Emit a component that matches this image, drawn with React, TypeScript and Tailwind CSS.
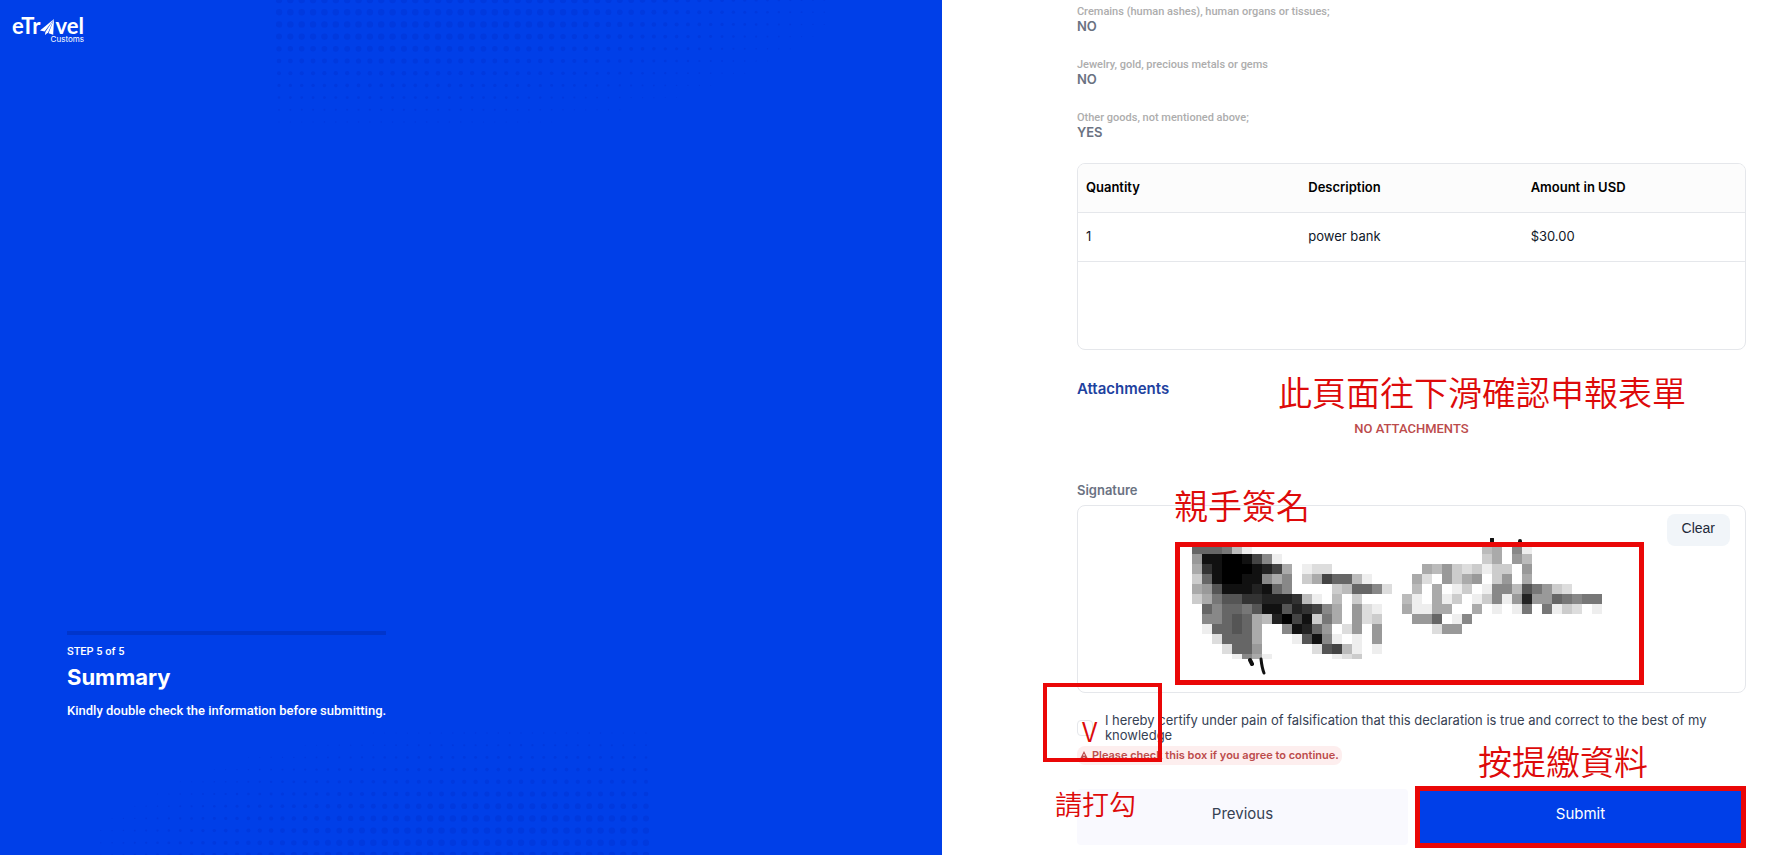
import React from "react";

type Declaration = { question: string; answer: string };
type Item = { quantity: number; description: string; amount: string };

const DECLARATIONS: Declaration[] = [
  { question: "Cremains (human ashes), human organs or tissues;", answer: "NO" },
  { question: "Jewelry, gold, precious metals or gems", answer: "NO" },
  { question: "Other goods, not mentioned above;", answer: "YES" }
];

const ITEMS: Item[] = [
  { quantity: 1, description: "power bank", amount: "$30.00" }
];

// one hex digit of grey per 10px block, "." is empty
const MOSAIC = [
  "6667be......................." + "ba.8e........",
  "91100148e...................." + "ca.9b........",
  "a31000124a.edd......." + "..ab9cdcecc.9........",
  "c6100118a8.ca466be..." + ".ad.9ca9.c9.a........",
  "a951112168....cb668d." + ".b.a.ec.e88b579cd....",
  "ca755332223be.b.c...." + "be.aec.ec8e929967877.",
  ".6866751152348a.9de.." + "aeeaa..a.e.e7.7ecd.e.",
  ".88656ab2041c7a.9dc.." + ".996.e8..............",
  ".e6656a..81269.d9.9.." + "...d99...............",
  "..d666a...e518e.e.9..",
  "...d669.....d54be.e..",
  "....e8ae......edc...."
];

const Dots = ({ flipped }: { flipped?: boolean }) => {
  const dots: React.ReactNode[] = [];
  for (let row = 0; row < 12; row++) {
    for (let col = 0; col < 49; col++) {
      const x = 3 + col * 11.36;
      const y = row * 12.2;
      const distance = Math.hypot((x - 124) / 510, (y + 50) / 195);
      const r = Math.min(3.2, 6 * (1 - distance));
      if (r > 0.4) {
        dots.push(<circle key={`${row}-${col}`} cx={x} cy={y} r={r} />);
      }
    }
  }
  return (
    <svg
      aria-hidden="true"
      width="560"
      height="140"
      viewBox="0 0 560 140"
      fill="#0039de"
      className={
        flipped
          ? "absolute bottom-0 left-[89px] rotate-180"
          : "absolute top-0 left-[276px]"
      }
    >
      {dots}
    </svg>
  );
};

const Logo = () => (
  <a href="#" aria-label="eTravel Customs" className="flex w-fit flex-col items-end">
    <span className="flex items-end text-[22px] leading-5 font-bold font-['Lato',sans-serif]">
      eTr
      <svg
        aria-hidden="true"
        width="15"
        height="18"
        viewBox="0 0 15 18"
        fill="currentColor"
      >
        <path d="M14 1 0 12.5l4.6 1Z" />
        <path d="M14 1 5.4 14l-.4 3 3.2-2.4Z" />
        <path d="M14 1 8.6 15.2l4.6 1.6Z" />
      </svg>
      vel
    </span>
    <span className="text-[8px] leading-[6px]">Customs</span>
  </a>
);

const Signature = () => (
  <svg
    aria-hidden="true"
    width="420"
    height="144"
    viewBox="0 0 420 144"
    shapeRendering="crispEdges"
    className="absolute top-8 left-[114px]"
  >
    {MOSAIC.map((row, y) =>
      row.split("").map((shade, x) =>
        shade === "." ? null : (
          <rect
            key={`${x}-${y}`}
            x={x * 10}
            y={y === 0 ? 8 : 6 + y * 10}
            width="10"
            height={y === 0 ? 8 : y === 11 ? 5 : 10}
            fill={`#${shade}${shade}${shade}`}
          />
        )
      )
    )}
    <g
      stroke="#111"
      strokeWidth="4"
      strokeLinecap="round"
      fill="none"
      shapeRendering="auto"
    >
      <path d="M300 1v4M328 3v2M58 122l2 4" />
      <path d="M69 121q1 9 3 14" strokeWidth="3" />
    </g>
  </svg>
);

const Note = ({ className, children }: { className: string; children: string }) => (
  <span
    className={`pointer-events-none absolute z-10 font-[350] whitespace-nowrap text-[#dd0a0a] font-['Noto_Sans_CJK_TC',sans-serif] ${className}`}
  >
    {children}
  </span>
);

const App = () => (
  <div className="flex min-h-screen bg-white font-['Inter',sans-serif] text-gray-900">
    <aside className="relative flex w-[52.8%] flex-col justify-between overflow-hidden bg-[#003fe8] text-white">
      <Dots />
      <Dots flipped />
      <div className="relative pt-4 pl-3">
        <Logo />
      </div>
      <div className="relative w-fit pb-[134px] pl-[67px]">
        <div className="h-1 bg-[#0035cc]" />
        <p className="mt-2 text-[11px] leading-[18px] font-medium font-['Roboto',sans-serif]">
          STEP 5 of 5
        </p>
        <h1 className="text-[22px] leading-8 font-bold">Summary</h1>
        <p className="mt-2 text-[13px] leading-5 font-medium font-['Roboto',sans-serif]">
          Kindly double check the information before submitting.
        </p>
      </div>
    </aside>

    <main className="flex-1 pt-1 pr-[38px] pb-1 pl-[135px]">
      <dl>
        {DECLARATIONS.map(({ question, answer }) => (
          <div key={question} className="h-[53px]">
            <dt className="text-[11px] leading-[15px] font-medium text-[#adadad] font-['Roboto',sans-serif]">
              {question}
            </dt>
            <dd className="text-[13px] leading-[14px] font-semibold text-gray-500">{answer}</dd>
          </div>
        ))}
      </dl>

      <div className="h-[187px] overflow-hidden rounded-lg border border-gray-200">
        <table className="w-full table-fixed border-separate border-spacing-0 text-left text-[13px]">
          <thead className="bg-[#fcfcfc] text-black">
            <tr className="h-[49px]">
              <th className="border-b border-gray-200 px-2 font-semibold">Quantity</th>
              <th className="border-b border-gray-200 px-2 font-semibold">Description</th>
              <th className="border-b border-gray-200 px-2 font-semibold">Amount in USD</th>
            </tr>
          </thead>
          <tbody>
            {ITEMS.map(({ quantity, description, amount }) => (
              <tr key={description} className="h-[49px]">
                <td className="border-b border-gray-200 px-2">{quantity}</td>
                <td className="border-b border-gray-200 px-2">{description}</td>
                <td className="border-b border-gray-200 px-2">{amount}</td>
              </tr>
            ))}
          </tbody>
        </table>
      </div>

      <section className="relative mt-[27px]">
        <h2 className="text-[15px] leading-6 font-semibold text-[#1e429f]">Attachments</h2>
        <Note className="-top-[5px] right-[60px] text-[34px] leading-10">
          此頁面往下滑確認申報表單
        </Note>
        <p className="mt-[18px] text-center text-[13px] leading-5 font-medium text-[#bc4b4b] font-['Roboto',sans-serif]">
          NO ATTACHMENTS
        </p>
      </section>

      <section className="mt-[41px]">
        <h2 className="text-[13px] leading-5 font-semibold text-gray-500">Signature</h2>
        <div className="relative mt-[5px] h-[188px] rounded-lg border border-gray-200">
          <Note className="-top-[21px] left-[96px] text-[34px] leading-10">親手簽名</Note>
          <Signature />
          <div className="pointer-events-none absolute top-9 right-[101px] bottom-[7px] left-[97px] border-[5px] border-[#ea0707]" />
          <button
            type="button"
            className="absolute top-2 right-[15px] rounded-lg bg-slate-100 px-[15px] pt-1 pb-2 text-sm leading-5 text-gray-800 font-['Liberation_Sans',sans-serif]"
          >
            Clear
          </button>
        </div>
      </section>

      <section className="relative mt-5">
        <div className="flex items-center gap-3">
          <input
            id="certify"
            type="checkbox"
            className="size-4 shrink-0 appearance-none rounded border border-gray-200 bg-white"
          />
          <label htmlFor="certify" className="text-[13px] leading-[15px] text-gray-700">
            I hereby certify under pain of falsification that this declaration is true and
            correct to the best of my knowledge
          </label>
        </div>
        <p className="mt-[3px] flex w-fit items-center gap-1 rounded-lg bg-[#fdeeee] px-[3px] pb-px text-[11px] leading-[18px] font-semibold text-[#bc4b4b]">
          <svg aria-hidden="true" width="8" height="8" viewBox="0 0 8 8">
            <path d="M4 0 8 8H0Z" fill="currentColor" />
            <path d="M4 3v2M4 6v1" stroke="#fff" />
          </svg>
          Please check this box if you agree to continue.
        </p>
        <div className="pointer-events-none absolute -top-[30px] -left-[34px] h-[79px] w-[119px] border-4 border-[#ea0707]" />
        <Note className="top-0.5 left-[5px] text-[27px] leading-8">V</Note>
      </section>

      <div className="relative mt-[21px] grid grid-cols-2 items-center gap-[7px]">
        <button type="button" className="h-14 rounded bg-[#f9f9fe] pb-1.5 text-[15px] text-gray-700">
          Previous
        </button>
        <button
          type="submit"
          className="h-[62px] border-[5px] border-[#ea0707] bg-[#003fe8] pb-1.5 text-[15px] text-white"
        >
          Submit
        </button>
        <Note className="-top-0.5 -left-[22px] text-[27px] leading-10">請打勾</Note>
        <Note className="-top-[45px] right-[98px] text-[34px] leading-10">按提繳資料</Note>
      </div>
    </main>
  </div>
);

export default App;
